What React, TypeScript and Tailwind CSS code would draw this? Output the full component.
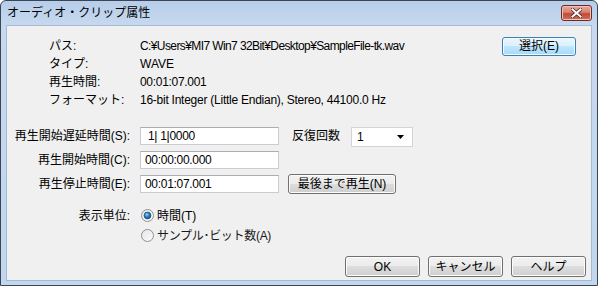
import React from 'react';

const font = "font-['Liberation_Sans','Noto_Sans_CJK_JP',sans-serif]";

const info = [
  ['パス:', 'C:¥Users¥MI7 Win7 32Bit¥Desktop¥SampleFile-tk.wav', 'tracking-[-0.6px]'],
  ['タイプ:', 'WAVE', ''],
  ['再生時間:', '00:01:07.001', 'tracking-[-0.3px]'],
  ['フォーマット:', '16-bit Integer (Little Endian), Stereo, 44100.0 Hz', 'tracking-[-0.25px]'],
];

const btn =
  'flex items-center justify-center rounded-[3px] border border-[#707070] bg-[linear-gradient(to_bottom,#f2f2f2_0%,#ebebeb_50%,#dddddd_50%,#cfcfcf_100%)] text-[12px] text-black shadow-[inset_0_0_0_1px_#fcfcfc]';

const field =
  'h-[18px] w-[139px] border border-[#c9ccd1] border-t-[#abadb3] bg-white px-[4px] text-[12px] leading-[16px] tracking-[-0.3px] text-black';

const Radio: React.FC<{ on?: boolean }> = ({ on }) => (
  <svg width="13" height="13" viewBox="0 0 13 13" className="shrink-0">
    <defs>
      <linearGradient id={on ? 'rOn' : 'rOff'} x1="0" y1="0" x2="1" y2="1">
        <stop offset="0" stopColor="#e6e6e6" />
        <stop offset="1" stopColor="#fbfbfb" />
      </linearGradient>
      <radialGradient id="dot" cx="0.4" cy="0.35" r="0.7">
        <stop offset="0" stopColor="#9ad4f5" />
        <stop offset="0.5" stopColor="#2a7dc8" />
        <stop offset="1" stopColor="#1b4f86" />
      </radialGradient>
    </defs>
    <circle cx="6.5" cy="6.5" r="6" fill={`url(#${on ? 'rOn' : 'rOff'})`} stroke="#8e9094" />
    {on && <circle cx="6.5" cy="6.5" r="3.4" fill="url(#dot)" stroke="#1c4a78" strokeWidth="0.8" />}
  </svg>
);

const App: React.FC = () => {
  return (
    <div className={`${font} h-[286px] w-[598px] overflow-hidden bg-white`}>
      <div className="flex h-[286px] w-[598px] flex-col rounded-t-[6px] border border-[#3a4656] bg-[linear-gradient(to_bottom,#b7cde8_0px,#c6d9ef_24px,#c2d6ed_100%)]">
        {/* title bar */}
        <div className="flex h-[23px] shrink-0 items-center justify-between pl-[6px] pr-[5px]">
          <span className="text-[12px] text-black">オーディオ・クリップ属性</span>
          <div className="mt-[1px] flex h-[16px] w-[31px] items-center justify-center rounded-[3px] border border-[#6b2a24] bg-[linear-gradient(to_bottom,#e9a99c_0%,#d7816f_45%,#c24a36_55%,#d1705a_100%)] shadow-[inset_0_0_0_1px_#f1c2b8]">
            <svg width="11" height="10" viewBox="0 0 11 10">
              <path d="M1.5 1.5 L9.5 8.5 M9.5 1.5 L1.5 8.5" stroke="#4a2320" strokeWidth="3.6" strokeLinecap="square" />
              <path d="M1.5 1.5 L9.5 8.5 M9.5 1.5 L1.5 8.5" stroke="#ffffff" strokeWidth="2" strokeLinecap="square" />
            </svg>
          </div>
        </div>

        {/* client area */}
        <div className="mx-[5px] mb-[4px] mt-[1px] flex flex-1 flex-col border border-[#a6bad3] bg-[#f0f0f0] text-[12px] text-black">
          {/* info */}
          <div className="mt-[11px] flex flex-col">
            {info.map(([k, v, t], i) => (
              <div key={k} className="flex h-[18px] items-center pl-[42px]">
                <span className="w-[91px] shrink-0">{k}</span>
                <span className={`whitespace-nowrap ${t}`}>{v}</span>
                {i === 0 && (
                  <div className="ml-auto mr-[15px] flex h-[19px] w-[74px] items-center justify-center rounded-[3px] border border-[#3c7fb1] bg-[linear-gradient(to_bottom,#eaf6fd_0%,#d9f0fc_50%,#bee6fd_50%,#a7d9f5_100%)] shadow-[inset_0_0_0_1px_#f4fbfe]">
                    選択(E)
                  </div>
                )}
              </div>
            ))}
          </div>

          {/* form */}
          <div className="mt-[18px] flex flex-col gap-[6px]">
            <div className="flex h-[18px] items-start">
              <span className="w-[123px] shrink-0 text-right leading-[18px]">再生開始遅延時間(S):</span>
              <div className={`ml-[10px] ${field} pl-[7px]`}>1| 1|0000</div>
              <span className="ml-[13px] leading-[18px]">反復回数</span>
              <div className="ml-[11px] flex h-[20px] w-[62px] items-center justify-between border border-[#d2d4d8] bg-white pl-[5px] pr-[8px]">
                <span>1</span>
                <svg width="7" height="4" viewBox="0 0 7 4">
                  <path d="M0 0 H7 L3.5 4 Z" fill="#000" />
                </svg>
              </div>
            </div>
            <div className="flex h-[18px] items-start">
              <span className="w-[123px] shrink-0 text-right leading-[18px]">再生開始時間(C):</span>
              <div className={`ml-[10px] ${field}`}>00:00:00.000</div>
            </div>
            <div className="flex h-[18px] items-start">
              <span className="w-[123px] shrink-0 text-right leading-[18px]">再生停止時間(E):</span>
              <div className={`ml-[10px] ${field}`}>00:01:07.001</div>
              <div className={`ml-[9px] -mt-[1px] h-[20px] w-[108px] ${btn}`}>最後まで再生(N)</div>
            </div>
          </div>

          {/* display unit */}
          <div className="mt-[13px] flex flex-col">
            <div className="flex h-[19px] items-center">
              <span className="w-[123px] shrink-0 text-right">表示単位:</span>
              <div className="ml-[11px] flex items-center gap-[3px]">
                <Radio on />
                <span>時間(T)</span>
              </div>
            </div>
            <div className="mt-[1px] flex h-[19px] items-center pl-[134px]">
              <div className="flex items-center gap-[3px] text-[#1a1a1a]">
                <Radio />
                <span className="tracking-[-0.3px]">サンプル･ビット数(A)</span>
              </div>
            </div>
          </div>

          {/* buttons */}
          <div className="mt-[11px] flex justify-end gap-[8px] pr-[5px]">
            <div className={`h-[21px] w-[75px] ${btn}`}>OK</div>
            <div className={`h-[21px] w-[75px] ${btn}`}>キャンセル</div>
            <div className={`h-[21px] w-[75px] ${btn}`}>ヘルプ</div>
          </div>
        </div>
      </div>
    </div>
  );
};

export default App;
